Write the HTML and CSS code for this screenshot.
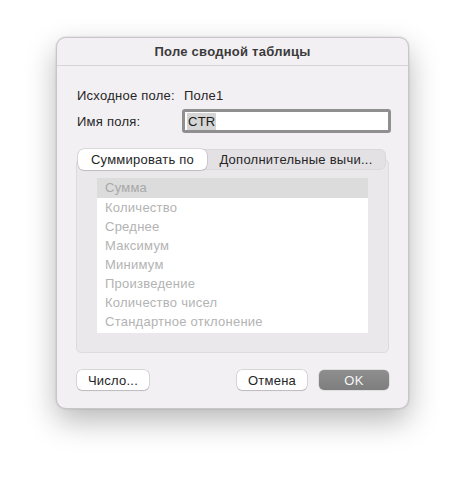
FILE: index.html
```html
<!DOCTYPE html>
<html lang="ru">
<head>
<meta charset="utf-8">
<link rel="stylesheet" href="styles.css">
</head>
<body>
<div class="dialog">
  <div class="titlebar">Поле сводной таблицы</div>
  <div class="content">
    <div class="row info">
      <span class="label">Исходное поле:</span>
      <span class="value">Поле1</span>
    </div>
    <div class="row name">
      <span class="label label-name">Имя поля:</span>
      <div class="input"><span class="sel">CTR</span></div>
    </div>
    <div class="tabs">
      <div class="tab active">Суммировать по</div>
      <div class="tab">Дополнительные вычи...</div>
    </div>
    <div class="group">
      <div class="list">
        <div class="item selected">Сумма</div>
        <div class="item">Количество</div>
        <div class="item">Среднее</div>
        <div class="item">Максимум</div>
        <div class="item">Минимум</div>
        <div class="item">Произведение</div>
        <div class="item">Количество чисел</div>
        <div class="item">Стандартное отклонение</div>
      </div>
    </div>
    <div class="buttons">
      <div class="btn btn-number">Число...</div>
      <div class="spacer"></div>
      <div class="btn btn-cancel">Отмена</div>
      <div class="btn btn-ok">OK</div>
    </div>
  </div>
</div>
</body>
</html>
```
FILE: styles.css
```css
html, body {
  margin: 0;
  padding: 0;
  background: #ffffff;
}
body {
  width: 465px;
  height: 483px;
  overflow: hidden;
  font-family: "Liberation Sans", Arial, sans-serif;
  font-size: 13px;
  letter-spacing: 0.25px;
  color: #262626;
}
.dialog {
  margin: 37px 0 0 56px;
  width: 353px;
  height: 372px;
  box-sizing: border-box;
  background: #f3f0f3;
  border: 1px solid #c9c6c9;
  border-radius: 10px;
  box-shadow: 0 12px 30px rgba(0, 0, 0, 0.28), 0 0 2px rgba(0, 0, 0, 0.2);
  display: flex;
  flex-direction: column;
}
.titlebar {
  height: 27px;
  border-bottom: 1px solid #d8d5d8;
  display: flex;
  align-items: center;
  justify-content: center;
  font-weight: bold;
  color: #3a3a3a;
}
.content {
  padding: 0 19px 0 19px;
  display: flex;
  flex-direction: column;
}
.row {
  display: flex;
  align-items: center;
}
.info {
  margin-top: 21px;
  height: 16px;
}
.label {
  flex-shrink: 0;
  width: 105px;
  padding-left: 1px;
}
.value {
  padding-left: 2px;
}
.name {
  margin-top: 6px;
  height: 24px;
}
.input {
  flex-shrink: 0;
  box-sizing: border-box;
  width: 209px;
  height: 24px;
  border: 3px solid #8f8f8f;
  border-radius: 3px;
  background: #ffffff;
  display: flex;
  align-items: center;
  padding-left: 2px;
  color: #1a1a1a;
}
.sel {
  background: #d5d5d5;
  padding: 1px 1px;
}
.tabs {
  position: relative;
  z-index: 1;
  margin: 16px 0 0 2px;
  width: 308px;
  height: 21px;
  box-sizing: border-box;
  background: #e4e1e4;
  border: 1px solid #dcd9dc;
  border-radius: 6px;
  display: flex;
  align-items: stretch;
}
.tab {
  display: flex;
  align-items: center;
  justify-content: center;
  color: #262626;
}
.tab.active {
  width: 129px;
  margin: -1px 0 -1px -1px;
  background: #ffffff;
  border-radius: 6px;
  box-shadow: 0 0 0 0.5px rgba(0, 0, 0, 0.2), 0 1px 1px rgba(0, 0, 0, 0.1);
}
.tab:not(.active) {
  flex: 1;
}
.group {
  margin-top: -11px;
  width: 313px;
  height: 194px;
  box-sizing: border-box;
  background: #ebe8eb;
  border: 1px solid #dedbde;
  border-radius: 5px;
  padding: 18px 20px 0 20px;
}
.list {
  background: #ffffff;
  height: 155px;
  box-sizing: border-box;
  padding-bottom: 3px;
}
.item {
  height: 19px;
  line-height: 19px;
  padding-left: 8px;
  color: #b3b3b3;
}
.item.selected {
  height: 20px;
  line-height: 20px;
  background: #dcdcdc;
  color: #a8a8a8;
}
.buttons {
  margin-top: 17px;
  display: flex;
  align-items: center;
  padding-left: 1px;
}
.spacer {
  flex: 1;
}
.btn {
  flex-shrink: 0;
  height: 20px;
  box-sizing: border-box;
  display: flex;
  align-items: center;
  justify-content: center;
  background: #ffffff;
  border-radius: 5px;
  box-shadow: 0 0 0 0.5px rgba(0, 0, 0, 0.22), 0 1px 1px rgba(0, 0, 0, 0.12);
  color: #262626;
}
.btn-number {
  width: 72px;
}
.btn-cancel {
  width: 70px;
  margin-right: 12px;
}
.btn-ok {
  width: 70px;
  background: linear-gradient(#8e8e8e, #7e7e7e);
  color: #f5f5f5;
  box-shadow: 0 0 0 0.5px rgba(0, 0, 0, 0.15);
}
```
